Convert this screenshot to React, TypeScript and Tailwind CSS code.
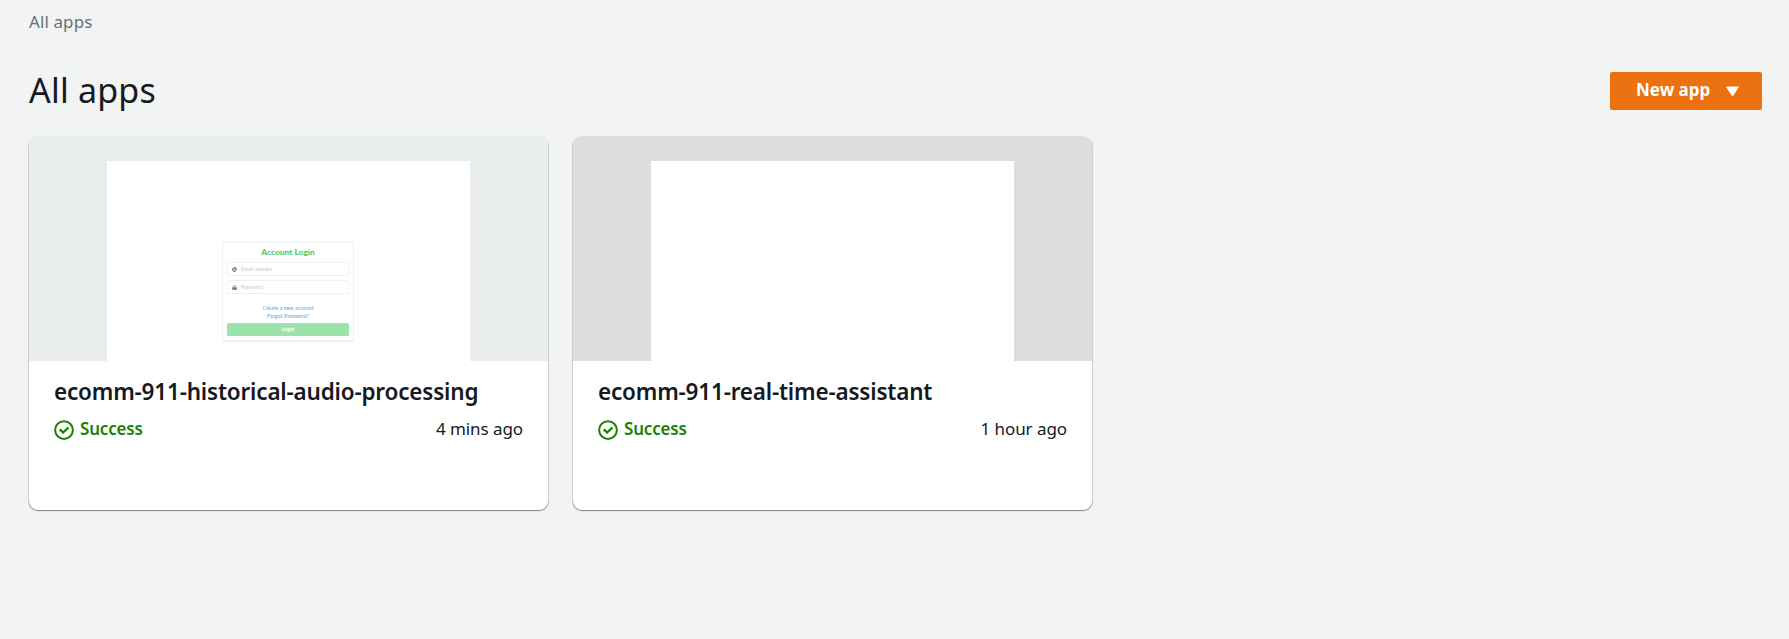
import type { ReactNode } from "react";

function SuccessIcon() {
  return (
    <svg className="mt-px h-5 w-5 shrink-0" viewBox="0 0 16 16" fill="none" stroke="#1d8102" strokeWidth="1.6">
      <circle cx="8" cy="8" r="7.1" />
      <path d="M4.6 7.6 7.3 10 11.5 6.1" strokeWidth="1.9" />
    </svg>
  );
}

function LoginPreview() {
  return (
    <div className="mt-[81px] -ml-px flex h-[99px] w-[132px] flex-col rounded-[2px] border border-[#f1f1f1] bg-white px-[4px] font-['Lato',sans-serif] shadow-[0_1px_1px_#eeeeee]">
      <div className="mt-[4px] h-[11px] text-center text-[8.3px] leading-[11px] font-black tracking-[0.05px] whitespace-nowrap text-[#4acb63]">Account Login</div>
      <div className="mt-[4px] flex h-[14px] shrink-0 items-center gap-[4px] rounded-[1px] border border-[#f1f1f1] pl-[4px]">
        <svg className="h-[5px] w-[5px]" viewBox="0 0 10 10" fill="none" stroke="#777777" strokeWidth="2">
          <circle cx="5" cy="5" r="2" />
          <path d="M7 3v3q2 1 2-1a4 4 0 1 0-2 3.5" />
        </svg>
        <span className="text-[5px] leading-none tracking-[0.1px] text-[#c8c8c8]">Email address</span>
      </div>
      <div className="mt-[4px] flex h-[14px] shrink-0 items-center gap-[4px] rounded-[1px] border border-[#f1f1f1] pl-[4px]">
        <svg className="h-[5px] w-[5px]" viewBox="0 0 10 10" fill="#777777" stroke="#777777">
          <path d="M1 5h8v4.5H1z" />
          <path d="M3 5V3a2 2 0 0 1 4 0v2" fill="none" strokeWidth="1.5" />
        </svg>
        <span className="text-[5px] leading-none tracking-[0.1px] text-[#c8c8c8]">Password</span>
      </div>
      <div className="mt-[10px] text-center text-[5.4px] leading-[8.3px] whitespace-nowrap text-[#6ca3db]">
        <div>Create a new account</div>
        <div>Forgot Password?</div>
      </div>
      <div className="mt-[2px] h-[13px] shrink-0 rounded-[1px] bg-[#9be2ab] text-center text-[5px] leading-[13px] font-bold text-white">Login</div>
    </div>
  );
}

type AppCardProps = {
  name: string;
  updated: string;
  backdrop: string;
  preview?: ReactNode;
};

function AppCard({ name, updated, backdrop, preview }: AppCardProps) {
  return (
    <article className="h-[374px] w-[519px] overflow-hidden rounded-[9px] bg-white shadow-[0_1px_1px_0_#001c244d,1px_1px_1px_0_#001c2426,-1px_1px_1px_0_#001c2426]">
      <div className={`flex h-[225px] justify-center pt-[25px] ${backdrop}`}>
        <div className="flex h-[200px] w-[363px] justify-center bg-white">{preview}</div>
      </div>
      <div className="px-[25px] pt-[15px]">
        <h2 className="h-8 text-[22.5px] leading-8 font-semibold tracking-[-0.19px] whitespace-nowrap">{name}</h2>
        <div className="mt-[9px] flex h-6 items-center justify-between">
          <div className="flex items-center gap-[6px] text-[#1d8102]">
            <SuccessIcon />
            <span className="text-[17px] leading-6 font-semibold tracking-[-0.2px]">Success</span>
          </div>
          <span className="text-[17px] leading-6 tracking-[-0.07px]">{updated}</span>
        </div>
      </div>
    </article>
  );
}

export default function App() {
  return (
    <main className="min-h-[639px] bg-[#f2f3f3] pr-[27px] pl-[29px] font-['Noto_Sans',sans-serif] text-[#16191f]">
      <nav className="h-[44px] pt-[10px] text-[17px] leading-6 tracking-[0.1px] text-[#687078]">All apps</nav>
      <header className="flex h-[92px] items-start justify-between pt-[23px]">
        <h1 className="mt-[-1px] text-[34px] leading-[48px] tracking-[0.2px]">All apps</h1>
        <button className="mt-[5px] flex h-[38px] w-[152px] items-center rounded-[2px] bg-[#ec7211] pl-[26px] text-[17px] font-bold text-white">
          <span className="mt-[-2px] w-[90px] text-left leading-6 whitespace-nowrap">New app</span>
          <svg className="h-[11px] w-[13px]" viewBox="0 0 13 11" fill="white" stroke="white" strokeLinejoin="round">
            <path d="M.5 1h12l-6 9z" />
          </svg>
        </button>
      </header>
      <section className="flex gap-[25px]">
        <AppCard name="ecomm-911-historical-audio-processing" updated="4 mins ago" backdrop="bg-[#eaeded]" preview={<LoginPreview />} />
        <AppCard name="ecomm-911-real-time-assistant" updated="1 hour ago" backdrop="bg-[#dddddd]" />
      </section>
    </main>
  );
}
